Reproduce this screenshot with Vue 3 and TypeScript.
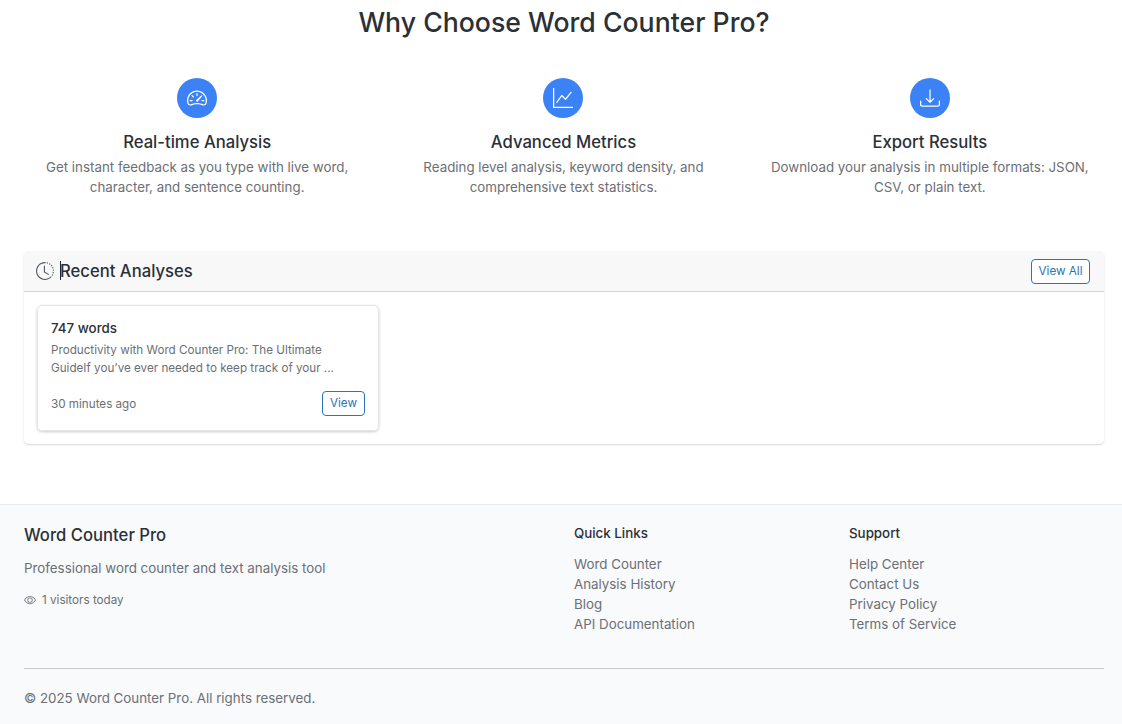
<script setup lang="ts">
const features = [
  {
    title: 'Real-time Analysis',
    text: 'Get instant feedback as you type with live word, character, and sentence counting.',
    paths: [
      'M8 4a.5.5 0 0 1 .5.5V6a.5.5 0 0 1-1 0V4.5A.5.5 0 0 1 8 4M3.732 5.732a.5.5 0 0 1 .707 0l.915.914a.5.5 0 1 1-.708.708l-.914-.915a.5.5 0 0 1 0-.707M2 10a.5.5 0 0 1 .5-.5h1.586a.5.5 0 0 1 0 1H2.5A.5.5 0 0 1 2 10m9.5 0a.5.5 0 0 1 .5-.5h1.5a.5.5 0 0 1 0 1H12a.5.5 0 0 1-.5-.5m.754-4.246a.39.39 0 0 0-.527-.02L7.547 9.31a.91.91 0 1 0 1.302 1.258l3.434-4.297a.39.39 0 0 0-.029-.518z',
      'M0 10a8 8 0 1 1 15.547 2.661c-.442 1.253-1.845 1.602-2.932 1.25C11.309 13.488 9.475 13 8 13c-1.474 0-3.31.488-4.615.911-1.087.352-2.49.003-2.932-1.25A8 8 0 0 1 0 10m8-7a7 7 0 0 0-6.603 9.329c.203.575.923.876 1.68.63C4.397 12.533 6.358 12 8 12s3.604.532 4.923.96c.757.245 1.477-.056 1.68-.631A7 7 0 0 0 8 3'
    ]
  },
  {
    title: 'Advanced Metrics',
    text: 'Reading level analysis, keyword density, and comprehensive text statistics.',
    paths: [
      'M0 0h1v15h15v1H0zm14.817 3.113a.5.5 0 0 1 .07.704l-4.5 5.5a.5.5 0 0 1-.74.037L7.06 6.767l-3.656 5.027a.5.5 0 0 1-.808-.588l4-5.5a.5.5 0 0 1 .758-.06l2.609 2.61 4.15-5.073a.5.5 0 0 1 .704-.07'
    ]
  },
  {
    title: 'Export Results',
    text: 'Download your analysis in multiple formats: JSON, CSV, or plain text.',
    paths: [
      'M.5 9.9a.5.5 0 0 1 .5.5v2.5a1 1 0 0 0 1 1h12a1 1 0 0 0 1-1v-2.5a.5.5 0 0 1 1 0v2.5a2 2 0 0 1-2 2H2a2 2 0 0 1-2-2v-2.5a.5.5 0 0 1 .5-.5',
      'M7.646 11.854a.5.5 0 0 0 .708 0l3-3a.5.5 0 0 0-.708-.708L8.5 10.293V1.5a.5.5 0 0 0-1 0v8.793L5.354 8.146a.5.5 0 1 0-.708.708z'
    ]
  }
]

const quickLinks = ['Word Counter', 'Analysis History', 'Blog', 'API Documentation']
const supportLinks = ['Help Center', 'Contact Us', 'Privacy Policy', 'Terms of Service']
</script>

<template>
  <div class="page">
    <main class="main">
      <h1 class="heading">Why Choose Word Counter Pro?</h1>

      <section class="features">
        <div v-for="f in features" :key="f.title" class="feature">
          <div class="feature-icon">
            <svg viewBox="0 0 16 16" width="20" height="20" fill="#fff">
              <path v-for="d in f.paths" :key="d" :d="d" fill-rule="evenodd" />
            </svg>
          </div>
          <h3>{{ f.title }}</h3>
          <p>{{ f.text }}</p>
        </div>
      </section>

      <section class="recent">
        <header class="recent-head">
          <h2>
            <svg class="clock" viewBox="0 0 16 16" width="18" height="18" fill="currentColor">
              <path d="M8.515 1.019A7 7 0 0 0 8 1V0a8 8 0 0 1 .589.022zm2.004.45a7 7 0 0 0-.985-.299l.219-.976q.576.129 1.126.342zm1.37.71a7 7 0 0 0-.439-.27l.493-.87a8 8 0 0 1 .979.654l-.615.789a7 7 0 0 0-.418-.302zm1.834 1.79a7 7 0 0 0-.653-.796l.724-.69q.406.429.747.91zm.744 1.352a7 7 0 0 0-.214-.468l.893-.45a8 8 0 0 1 .45 1.088l-.95.313a7 7 0 0 0-.179-.483m.53 2.507a7 7 0 0 0-.1-1.025l.985-.17q.1.58.116 1.17zm-.131 1.538q.05-.254.081-.51l.993.123a8 8 0 0 1-.23 1.155l-.964-.267q.069-.247.12-.501m-.952 2.379q.276-.436.486-.908l.914.405q-.24.54-.555 1.038zm-.964 1.205q.183-.183.35-.378l.758.653a8 8 0 0 1-.401.432z" />
              <path d="M8 1a7 7 0 1 0 4.95 11.95l.707.707A8.001 8.001 0 1 1 8 0z" />
              <path d="M7.5 3a.5.5 0 0 1 .5.5v5.21l3.248 1.856a.5.5 0 0 1-.496.868l-3.5-2A.5.5 0 0 1 7 9V3.5a.5.5 0 0 1 .5-.5" />
            </svg>
            <span class="recent-title"><i class="caret"></i>Recent Analyses</span>
          </h2>
          <button class="btn">View All</button>
        </header>
        <div class="recent-body">
          <article class="analysis">
            <h4>747 words</h4>
            <p>Productivity with Word Counter Pro: The Ultimate GuideIf you’ve ever needed to keep track of your ...</p>
            <div class="analysis-foot">
              <small>30 minutes ago</small>
              <button class="btn">View</button>
            </div>
          </article>
        </div>
      </section>
    </main>

    <footer class="footer">
      <div class="footer-row">
        <div class="col-brand">
          <h5>Word Counter Pro</h5>
          <p>Professional word counter and text analysis tool</p>
          <div class="visitors">
            <svg viewBox="0 0 16 16" width="12" height="12" fill="currentColor">
              <path d="M16 8s-3-5.5-8-5.5S0 8 0 8s3 5.5 8 5.5S16 8 16 8M1.173 8a13 13 0 0 1 1.66-2.043C4.12 4.668 5.88 3.5 8 3.5s3.879 1.168 5.168 2.457A13 13 0 0 1 14.828 8q-.086.13-.195.288c-.335.48-.83 1.12-1.465 1.755C11.879 11.332 10.119 12.5 8 12.5s-3.879-1.168-5.168-2.457A13 13 0 0 1 1.172 8z" />
              <path d="M8 5.5a2.5 2.5 0 1 0 0 5 2.5 2.5 0 0 0 0-5M4.5 8a3.5 3.5 0 1 1 7 0 3.5 3.5 0 0 1-7 0" />
            </svg>
            <span>1 visitors today</span>
          </div>
        </div>
        <div class="col-links">
          <h6>Quick Links</h6>
          <a v-for="l in quickLinks" :key="l">{{ l }}</a>
        </div>
        <div class="col-links">
          <h6>Support</h6>
          <a v-for="l in supportLinks" :key="l">{{ l }}</a>
        </div>
      </div>
      <div class="copyright">© 2025 Word Counter Pro. All rights reserved.</div>
    </footer>
  </div>
</template>

<style>
html,
body {
  margin: 0;
  background: #fff;
  overflow: hidden;
}
</style>

<style scoped>
.page {
  font-family: Inter, "Noto Sans", sans-serif;
  color: #2b3036;
  height: 724px;
  overflow: hidden;
}

.main {
  padding: 0 18px 0 24px;
}

.heading {
  margin: 0;
  padding-top: 5px;
  font-size: 26.67px;
  line-height: 35px;
  font-weight: 500;
  text-align: center;
}

.features {
  display: grid;
  grid-template-columns: repeat(3, 1fr);
  gap: 20px;
  margin: 38px 1px 0 0;
}

.feature {
  text-align: center;
  padding: 0 13px;
}

.feature-icon {
  width: 40px;
  height: 40px;
  margin: 0 auto;
  border-radius: 50%;
  background: #3b82f6;
  display: flex;
  align-items: center;
  justify-content: center;
}

.feature h3 {
  margin: 13px 0 0;
  font-size: 16.67px;
  line-height: 22px;
  font-weight: 500;
}

.feature p {
  margin: 4px 0 0;
  font-size: 13.33px;
  line-height: 20px;
  color: #6c6f75;
}

.recent {
  margin-top: 54px;
  border-radius: 5px;
  background: #fff;
  box-shadow: 0 1px 2px rgba(0, 0, 0, 0.16);
  overflow: hidden;
}

.recent-head {
  height: 40px;
  padding: 0 14px 0 12px;
  display: flex;
  align-items: center;
  justify-content: space-between;
  background: #f8f8f8;
  border-bottom: 1px solid #cfd1d2;
}

.recent-head h2 {
  margin: 0;
  display: flex;
  align-items: center;
  gap: 6px;
  font-size: 16.67px;
  line-height: 22px;
  font-weight: 500;
}

.clock {
  color: #555b61;
}

.recent-title {
  position: relative;
}

.caret {
  position: absolute;
  left: 0;
  top: 1px;
  width: 1px;
  height: 19px;
  background: #212529;
}

.btn {
  font-family: inherit;
  font-size: 11.67px;
  line-height: 17px;
  padding: 3px 7px;
  height: 25px;
  color: #2b74b8;
  background: #fff;
  border: 1px solid #2b74b8;
  border-radius: 4px;
}

.recent-head .btn {
  padding: 3px 6.5px;
}

.recent-body {
  display: grid;
  grid-template-columns: repeat(3, 1fr);
  gap: 14px;
  padding: 13px;
}

.analysis {
  padding: 13px 13px 14px;
  height: 126px;
  box-sizing: border-box;
  border: 1px solid #e3e5e7;
  border-radius: 5px;
  box-shadow: 0 1px 3px rgba(0, 0, 0, 0.2);
  display: flex;
  flex-direction: column;
}

.analysis h4 {
  margin: 0;
  font-size: 13.33px;
  line-height: 18px;
  font-weight: 500;
}

.analysis p {
  margin: 4px 0 0;
  max-width: 300px;
  font-size: 11.67px;
  line-height: 18px;
  color: #6c6f75;
}

.analysis-foot {
  margin-top: auto;
  display: flex;
  align-items: center;
  justify-content: space-between;
}

.analysis-foot small {
  font-size: 11.67px;
  color: #6c6f75;
}

.footer {
  margin-top: 60px;
  padding: 0 18px 0 24px;
  background: #f8fafc;
  border-top: 1px solid #e9ecef;
  height: 220px;
}

.footer-row {
  display: flex;
  padding-top: 19px;
}

.col-brand {
  flex: none;
  width: 550px;
}

.col-brand h5 {
  margin: 0;
  font-size: 16.67px;
  line-height: 22px;
  font-weight: 500;
}

.col-brand p {
  margin: 12px 0 0;
  font-size: 13.33px;
  line-height: 20px;
  color: #6c6f75;
}

.visitors {
  margin-top: 14px;
  display: flex;
  align-items: center;
  gap: 6px;
  font-size: 11.67px;
  line-height: 16px;
  color: #6c6f75;
}

.col-links {
  flex: none;
  width: 275px;
  margin-top: -1px;
  display: flex;
  flex-direction: column;
}

.col-links h6 {
  margin: 0 0 11px;
  font-size: 13.33px;
  line-height: 20px;
  font-weight: 500;
}

.col-links a {
  font-size: 13.33px;
  line-height: 20px;
  color: #6c6f75;
}

.copyright {
  margin-top: 34px;
  padding-top: 19px;
  border-top: 1px solid #c6c8ca;
  font-size: 13.33px;
  line-height: 20px;
  color: #6c6f75;
}
</style>
